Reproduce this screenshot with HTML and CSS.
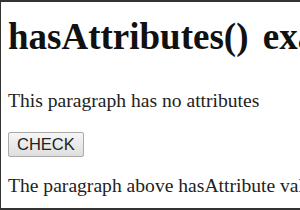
FILE: index.html
```html
<!DOCTYPE html>
<html lang="en">
<head>
  <meta charset="UTF-8">
  <title>hasAttributes() example</title>
  <link rel="stylesheet" href="styles.css">
</head>
<body>
  <div class="frame">
    <h1 class="title">hasAttributes() example</h1>
    <p id="para" class="text">This paragraph has no attributes</p>
    <button class="check-button" onclick="check()">CHECK</button>
    <p class="text" id="result">The paragraph above hasAttribute value is: false</p>
  </div>
</body>
</html>
```
FILE: styles.css
```css
/* page */
body {
  margin: 0;
  background: #fff;
  overflow: hidden;
}

.frame {
  height: 206px;
  border-top: 2px solid #333;
  border-left: 1px solid #333;
  border-bottom: 2px solid #333;
  padding-left: 7px;
  white-space: nowrap;
  overflow: hidden;
  font-family: "Liberation Serif", serif;
  color: #222;
}

.title {
  font-size: 37px;
  font-weight: bold;
  color: #111;
  line-height: 41px;
  word-spacing: 5px;
  margin: 14px 0 0;
}

.text {
  font-size: 19.6px;
  line-height: 21px;
  margin: 33px 0 0;
}

.check-button {
  display: block;
  margin-top: 21px;
  font-family: "Liberation Sans", sans-serif;
  font-size: 16.5px;
  line-height: 19px;
  padding: 2px 8px;
  border: 1px solid #aaa;
  border-radius: 2px;
  background: linear-gradient(#f6f6f6, #dedede);
  color: #222;
}

#result {
  margin-top: 18px;
}
```
